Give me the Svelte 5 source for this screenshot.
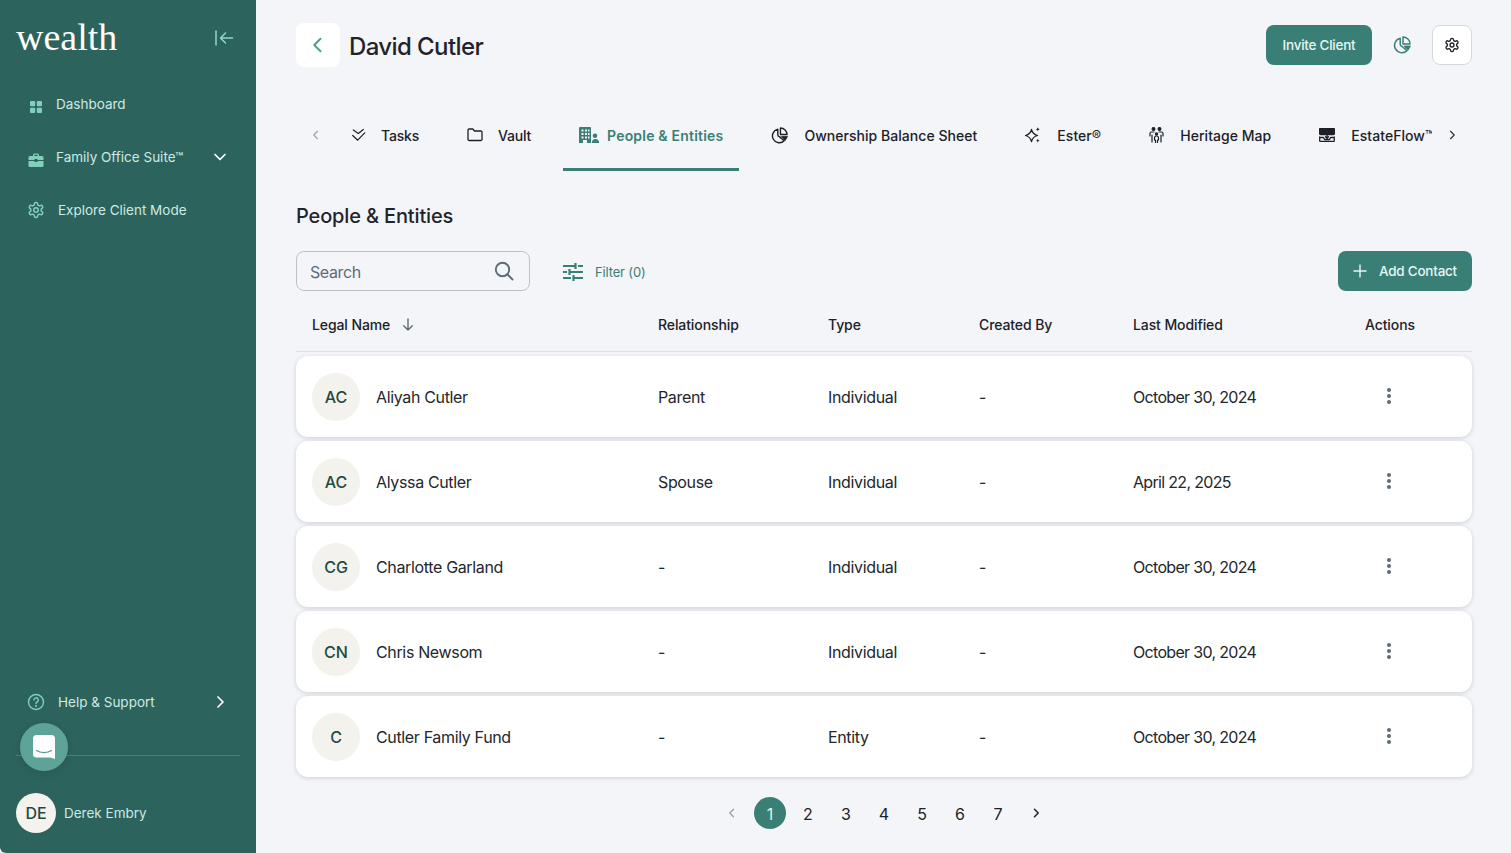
<script>
  const rows = [
    { i: 'AC', name: 'Aliyah Cutler', rel: 'Parent', type: 'Individual', date: 'October 30, 2024' },
    { i: 'AC', name: 'Alyssa Cutler', rel: 'Spouse', type: 'Individual', date: 'April 22, 2025' },
    { i: 'CG', name: 'Charlotte Garland', rel: '-', type: 'Individual', date: 'October 30, 2024' },
    { i: 'CN', name: 'Chris Newsom', rel: '-', type: 'Individual', date: 'October 30, 2024' },
    { i: 'C', name: 'Cutler Family Fund', rel: '-', type: 'Entity', date: 'October 30, 2024' }
  ];
  const pages = [1, 2, 3, 4, 5, 6, 7];
</script>

{#snippet gear(size)}
  <svg width={size} height={size} viewBox="0 0 24 24" fill="none" stroke="currentColor" stroke-width="2" stroke-linecap="round" stroke-linejoin="round">
    <path d="M12.22 2h-.44a2 2 0 0 0-2 2v.18a2 2 0 0 1-1 1.73l-.43.25a2 2 0 0 1-2 0l-.15-.08a2 2 0 0 0-2.73.73l-.22.38a2 2 0 0 0 .73 2.73l.15.1a2 2 0 0 1 1 1.72v.51a2 2 0 0 1-1 1.74l-.15.09a2 2 0 0 0-.73 2.73l.22.38a2 2 0 0 0 2.73.73l.15-.08a2 2 0 0 1 2 0l.43.25a2 2 0 0 1 1 1.73V20a2 2 0 0 0 2 2h.44a2 2 0 0 0 2-2v-.18a2 2 0 0 1 1-1.73l.43-.25a2 2 0 0 1 2 0l.15.08a2 2 0 0 0 2.73-.73l.22-.39a2 2 0 0 0-.73-2.73l-.15-.08a2 2 0 0 1-1-1.74v-.5a2 2 0 0 1 1-1.74l.15-.09a2 2 0 0 0 .73-2.73l-.22-.38a2 2 0 0 0-2.73-.73l-.15.08a2 2 0 0 1-2 0l-.43-.25a2 2 0 0 1-1-1.73V4a2 2 0 0 0-2-2z"/>
    <circle cx="12" cy="12" r="3"/>
  </svg>
{/snippet}

{#snippet pie(size)}
  <svg width={size} height={size} viewBox="0 0 18 18" fill="none" stroke="currentColor" stroke-width="1.500" stroke-linejoin="round">
    <path d="M7.200 2.300a7.300 7.300 0 1 0 6.800 12.300L8.800 10.200a2 2 0 0 1-1.600-1.900z"/>
    <path d="M10 1a7 7 0 0 1 7 7h-7z"/>
    <path d="M11 10h6.500l-2.400 4.200z" fill="currentColor" stroke-width=".8"/>
  </svg>
{/snippet}

{#snippet chevron(dir, size, sw)}
  <svg width={size} height={size} viewBox="0 0 16 16" fill="none" stroke="currentColor" stroke-width={sw} stroke-linecap="round" stroke-linejoin="round">
    {#if dir === 'left'}<path d="M10 3 5 8l5 5"/>{:else if dir === 'right'}<path d="m6 3 5 5-5 5"/>{:else}<path d="m3 5.500 5 5 5-5"/>{/if}
  </svg>
{/snippet}

<div class="page">
  <aside class="side">
    <div class="brand">
      <span class="logo">wealth</span>
      <svg class="collapse" width="20" height="16" viewBox="0 0 20 16" fill="none" stroke="currentColor" stroke-width="1.500" stroke-linecap="round" stroke-linejoin="round">
        <path d="M2 1v14M18.500 8H6.500M11.500 3l-5 5 5 5"/>
      </svg>
    </div>
    <nav class="nav">
      <div class="item">
        <svg class="ico down" width="14" height="14" viewBox="0 0 14 14" fill="currentColor"><rect x="1" y="1" width="5.200" height="5.200" rx="1"/><rect x="7.800" y="1" width="5.200" height="5.200" rx="1"/><rect x="1" y="7.800" width="5.200" height="5.200" rx="1"/><rect x="7.800" y="7.800" width="5.200" height="5.200" rx="1"/></svg>
        <span>Dashboard</span>
      </div>
      <div class="item">
        <svg class="ico down" width="16" height="14" viewBox="0 0 16 14" fill="currentColor"><path d="M5 3V2a1.500 1.500 0 0 1 1.500-1.500h3A1.500 1.500 0 0 1 11 2v1h3a1.500 1.500 0 0 1 1.500 1.500V7H9.500V6h-3v1H.5V4.500A1.500 1.500 0 0 1 2 3zm1.300 0h3.400V1.800H6.300zM.5 8h6v1h3V8h6v4.500A1.500 1.500 0 0 1 14 14H2a1.500 1.500 0 0 1-1.500-1.500z"/></svg>
        <span>Family Office Suite™</span>
        <span class="end white">{@render chevron('down', 16, 1.7)}</span>
      </div>
      <div class="item explore">
        <span class="ico">{@render gear(18)}</span>
        <span>Explore Client Mode</span>
      </div>
    </nav>
    <div class="bottom">
      <div class="item help">
        <svg class="ico" width="18" height="18" viewBox="0 0 18 18" fill="none" stroke="currentColor" stroke-width="1.400" stroke-linecap="round"><circle cx="9" cy="9" r="7.500"/><path d="M6.900 7a2.200 2.200 0 1 1 3.300 1.900c-.8.450-1.200.9-1.200 1.600"/><circle cx="9" cy="13" r=".4"/></svg>
        <span>Help &amp; Support</span>
        <span class="end white">{@render chevron('right', 16, 1.7)}</span>
      </div>
      <div class="user">
        <span class="uav">DE</span>
        <span>Derek Embry</span>
      </div>
      <button class="chat" aria-label="Chat">
        <svg width="22" height="24" viewBox="0 0 22 24"><path d="M3.500 0h15A3.500 3.500 0 0 1 22 3.500V24l-4.500-1.500H3.500A3.500 3.500 0 0 1 0 19V3.500A3.500 3.500 0 0 1 3.500 0z" fill="#fff"/><path d="M3.500 15.500c4 2.700 11 2.700 15 0" fill="none" stroke="#5a9a90" stroke-width="1.300" stroke-linecap="round"/></svg>
      </button>
    </div>
  </aside>

  <main class="main">
    <header class="top">
      <button class="back" aria-label="Back">{@render chevron('left', 20, 1.5)}</button>
      <h1>David Cutler</h1>
      <div class="top-actions">
        <button class="btn invite">Invite Client</button>
        <span class="pie-top">{@render pie(18)}</span>
        <button class="settings" aria-label="Settings">{@render gear(16)}</button>
      </div>
    </header>

    <div class="tabbar">
      <span class="tabnav muted">{@render chevron('left', 12, 1.5)}</span>
      <div class="tabs">
        <div class="tab g13">
          <svg width="16" height="16" viewBox="0 0 16 16" fill="none" stroke="currentColor" stroke-width="1.200" stroke-linecap="round" stroke-linejoin="round"><path d="M1.300 3 6.300 6.500 11.300 2.500M.7 8.500l5 4.700 7-7.400"/></svg>
          <span>Tasks</span>
        </div>
        <div class="tab g15">
          <svg width="16" height="16" viewBox="0 0 16 16" fill="none" stroke="currentColor" stroke-width="1.300" stroke-linejoin="round"><path d="M1 3.200A1.200 1.200 0 0 1 2.200 2h3.600l1.700 2h6.300A1.200 1.200 0 0 1 15 5.200v7.100a1.200 1.200 0 0 1-1.200 1.200H2.200A1.200 1.200 0 0 1 1 12.300z"/></svg>
          <span>Vault</span>
        </div>
        <div class="tab active">
          <svg width="20" height="16" viewBox="0 0 20 16" fill="currentColor"><path fill-rule="evenodd" d="M1 0h10a1 1 0 0 1 1 1v15H0V1a1 1 0 0 1 1-1zm1.500 2.500v2h2v-2zm3.500 0v2h2v-2zm3 0v2h1.500v-2zM2.500 6v2h2V6zM6 6v2h2V6zm3 0v2h1.500V6zM2.500 9.500v2h2v-2zm3.500 0v2h2v-2zm3 0v2h1.500v-2zM4 13v3h4v-3z"/><circle cx="16" cy="8.700" r="2.300"/><path d="M13 16v-1.500a3 3 0 0 1 3-2.500 3.500 3.500 0 0 1 4 2.500V16z"/></svg>
          <span>People &amp; Entities</span>
        </div>
        <div class="tab">
          {@render pie(17)}
          <span>Ownership Balance Sheet</span>
        </div>
        <div class="tab">
          <svg width="16" height="16" viewBox="0 0 16 16" fill="none" stroke="currentColor" stroke-width="1.300" stroke-linejoin="round"><path d="M6.500 2.500Q7.500 7 12.500 8.500 7.500 10 6.500 14.500 5.500 10 .5 8.500 5.500 7 6.500 2.500z"/><path d="M12.800 0c.3 1.500.7 1.900 2.200 2.200-1.500.3-1.900.7-2.200 2.200-.3-1.500-.7-1.900-2.200-2.200 1.500-.3 1.900-.7 2.200-2.200zM12.800 11.400c.3 1.500.7 1.900 2.200 2.200-1.500.3-1.900.7-2.200 2.200-.3-1.500-.7-1.900-2.200-2.200 1.500-.3 1.900-.7 2.200-2.200z" fill="currentColor" stroke="none"/></svg>
          <span>Ester<span class="reg">®</span></span>
        </div>
        <div class="tab">
          <svg width="15" height="16" viewBox="0 0 15 16" fill="none" stroke="currentColor" stroke-width="1.200" stroke-linecap="round" stroke-linejoin="round"><circle cx="4.500" cy="2" r="1.400" fill="currentColor"/><circle cx="10.500" cy="2" r="1.400" fill="currentColor"/><circle cx="7.500" cy="7" r="1.100" fill="currentColor"/><path d="M1 9V6.500A1.500 1.500 0 0 1 2.500 5H5M14 9V6.500A1.500 1.500 0 0 0 12.500 5H10M3 8v7M12 8v7M5.500 13v-2a2 2 0 0 1 4 0v2M6.500 13v2.500M8.500 13v2.500"/></svg>
          <span>Heritage Map</span>
        </div>
        <div class="tab">
          <svg width="16" height="14" viewBox="0 0 16 14" fill="none" stroke="currentColor" stroke-width="1.300" stroke-linecap="round" stroke-linejoin="round"><rect x=".5" y=".5" width="15" height="6" rx="1" fill="currentColor"/><path d="M.7 9v3.500a1 1 0 0 0 1 1h12.600a1 1 0 0 0 1-1V9M.7 9.500h3.800l1 2h5l1-2h3.800M8 6v4M6.500 8.800 8 10.300l1.500-1.500"/></svg>
          <span>EstateFlow™</span>
        </div>
      </div>
      <span class="tabnav dark">{@render chevron('right', 12, 1.5)}</span>
    </div>

    <h2>People &amp; Entities</h2>

    <div class="tools">
      <label class="search">
        <input placeholder="Search" aria-label="Search" />
        <svg width="22" height="22" viewBox="0 0 22 22" fill="none" stroke="#5f6b76" stroke-width="1.900" stroke-linecap="round"><circle cx="9.500" cy="9.500" r="6.700"/><path d="m14.500 14.500 5 5"/></svg>
      </label>
      <button class="filter">
        <svg width="20" height="18" viewBox="0 0 20 18" fill="none" stroke="currentColor" stroke-width="2.200"><path d="M0 3h12M15 3h5M12.500 0v6M0 9h4M7 9h13M6.500 6v6M0 15h8M11 15h9M10.500 12v6"/></svg>
        <span>Filter (0)</span>
      </button>
      <button class="btn add">
        <svg width="14" height="14" viewBox="0 0 14 14" fill="none" stroke="currentColor" stroke-width="1.400" stroke-linecap="round"><path d="M7 1v12M1 7h12"/></svg>
        <span>Add Contact</span>
      </button>
    </div>

    <div class="grid head">
      <div class="sort">
        <span>Legal Name</span>
        <svg width="12" height="13" viewBox="0 0 12 13" fill="none" stroke="#5f6b76" stroke-width="1.400" stroke-linecap="round" stroke-linejoin="round"><path d="M6 1v11M1.700 7.700 6 12l4.300-4.300"/></svg>
      </div>
      <div>Relationship</div>
      <div>Type</div>
      <div>Created By</div>
      <div>Last Modified</div>
      <div>Actions</div>
    </div>

    <div class="rows">
      {#each rows as r}
        <div class="grid row">
          <div class="who"><span class="av">{r.i}</span><span>{r.name}</span></div>
          <div>{r.rel}</div>
          <div>{r.type}</div>
          <div>-</div>
          <div class="date">{r.date}</div>
          <div class="dots"><i></i><i></i><i></i></div>
        </div>
      {/each}
    </div>

    <div class="pager">
      <span class="pg muted">{@render chevron('left', 12, 1.7)}</span>
      {#each pages as p}
        <span class="pg num" class:on={p === 1}>{p}</span>
      {/each}
      <span class="pg">{@render chevron('right', 12, 2)}</span>
    </div>
  </main>
</div>

<style>
  :global(body) {
    margin: 0;
    background: #f3f5f9;
    font-family: Inter, "Liberation Sans", sans-serif;
    color: #1c2127;
  }
  button { font-family: inherit; border: 0; cursor: pointer; padding: 0; }
  .page { display: flex; width: 1511px; height: 853px; overflow: hidden; }

  .side {
    width: 256px; flex: none; box-sizing: border-box;
    background: #2c635c; color: #cdeae3;
    display: flex; flex-direction: column;
    border-radius: 0 0 0 6px;
    font-size: 13.500px;
  }
  .brand { height: 77px; flex: none; display: flex; align-items: center; justify-content: space-between; padding: 0 22px 4px 16px; box-sizing: border-box; }
  .logo { font-family: "Liberation Serif", serif; font-size: 38px; line-height: 1; color: #fff; }
  .collapse { color: #8fd8c6; margin-top: 2px; }
  .item { height: 53px; display: flex; align-items: center; padding: 0 28px; box-sizing: border-box; position: relative; white-space: nowrap; }
  .ico { color: #82d0bc; flex: none; display: flex; }
  .item > .ico { width: 16px; margin-right: 12px; }
  .item > svg.down { margin-top: 6px; }
  .item.explore > .ico, .item.help > .ico { width: 18px; margin: 0 13px 0 -1px; }
  .end { margin-left: auto; display: flex; }
  .white { color: #fff; }
  .bottom { margin-top: auto; position: relative; }
  .user { margin: 27px 16px 0; border-top: 1px solid #468178; height: 98px; padding: 37px 0 21px; box-sizing: border-box; display: flex; gap: 8px; align-items: center; }
  .uav { width: 40px; height: 40px; border-radius: 50%; background: #f4f2ec; color: #1d4a43; font-size: 16px; font-weight: 500; display: flex; align-items: center; justify-content: center; }
  .chat { position: absolute; left: 20px; top: 48px; width: 48px; height: 48px; border-radius: 50%; background: #5da397; display: flex; align-items: center; justify-content: center; box-shadow: 0 2px 8px rgba(0,0,0,.1); }

  .main { flex: 1; min-width: 0; padding: 23px 39px 0 40px; display: flex; flex-direction: column; }
  .top { display: flex; align-items: center; height: 44px; flex: none; }
  .back { width: 44px; height: 44px; border-radius: 8px; background: #fff; color: #4f9a8e; display: flex; align-items: center; justify-content: center; }
  h1 { margin: 2px 0 0 9px; font-size: 24px; font-weight: 500; letter-spacing: -.6px; color: #1f242b; }
  .top-actions { margin-left: auto; display: flex; align-items: center; }
  .btn { background: #3a7f76; color: #e6f6f1; height: 40px; border-radius: 8px; font-size: 13.500px; letter-spacing: -.25px; font-weight: 500; display: flex; align-items: center; justify-content: center; }
  .invite { width: 106px; }
  .pie-top { color: #3a7f76; display: flex; margin: 0 21px; }
  .settings { width: 40px; height: 40px; background: #fff; border: 1px solid #d5d8de; border-radius: 8px; display: flex; align-items: center; justify-content: center; box-sizing: border-box; color: #1c2127; }

  .tabbar { display: flex; margin-top: 33px; height: 71px; flex: none; }
  .tabnav { width: 40px; flex: none; height: 70px; display: flex; align-items: center; justify-content: center; }
  .muted { color: #9aa1a9; }
  .dark { color: #2b3138; }
  .tabs { flex: 1; min-width: 0; overflow: hidden; display: flex; gap: 16px; }
  .tab { flex: none; display: flex; align-items: center; gap: 16px; padding: 0 16px 1px; height: 71px; box-sizing: border-box; font-size: 14px; font-weight: 500; letter-spacing: .04px; white-space: nowrap; }
  .tab.g13 { gap: 13px; letter-spacing: -.2px; }
  .tab.g15 { gap: 15px; letter-spacing: -.2px; }
  .tab.active { color: #3a7f76; gap: 8px; font-weight: 600; letter-spacing: .2px; border-bottom: 3px solid #3a7f76; padding: 2px 16px 0; }
  .reg { font-weight: 400; }

  h2 { margin: 33px 0 0; font-size: 20px; font-weight: 500; line-height: 24px; letter-spacing: -.15px; color: #1f242b; }

  .tools { display: flex; align-items: center; margin-top: 23px; flex: none; }
  .search { width: 234px; height: 40px; box-sizing: border-box; border: 1px solid #bcc1c9; border-radius: 8px; display: flex; align-items: center; padding: 0 14px 0 13px; }
  .search input { flex: 1; min-width: 0; border: 0; outline: 0; background: none; font: inherit; font-size: 16px; letter-spacing: -.4px; padding: 2px 0 0; color: #5f6b76; }
  .search input::placeholder { color: #5f6b76; opacity: 1; }
  .filter { background: none; color: #3a7f76; display: flex; align-items: center; gap: 12px; margin-left: 33px; font-size: 13px; letter-spacing: -.15px; padding-top: 2px; }
  .add { margin-left: auto; width: 134px; gap: 12px; }

  .grid { display: grid; grid-template-columns: 346px 170px 151px 154px 232px 1fr; align-items: center; padding-left: 16px; }
  .head { height: 61px; box-sizing: border-box; border-bottom: 1px solid #dcdfe4; font-size: 14px; font-weight: 500; letter-spacing: -.1px; margin-bottom: 4px; flex: none; padding-top: 6px; }
  .sort { display: flex; align-items: center; gap: 12px; }
  .rows { display: flex; flex-direction: column; gap: 4px; }
  .row { background: #fff; height: 81px; border-radius: 12px; box-shadow: 0 1px 4px rgba(30,40,60,.18); font-size: 16px; letter-spacing: -.35px; color: #22272d; }
  .date { letter-spacing: -.68px; }
  .who { display: flex; align-items: center; gap: 16px; }
  .av { width: 48px; height: 48px; border-radius: 50%; background: #f4f2ec; color: #1d4a43; font-size: 16px; font-weight: 500; letter-spacing: 0; display: flex; align-items: center; justify-content: center; }
  .dots { display: flex; flex-direction: column; gap: 2px; padding: 0 0 2px 22px; }
  .dots i { width: 4px; height: 4px; border-radius: 50%; background: #5f6b76; display: block; }

  .pager { display: flex; justify-content: center; gap: 6px; margin-top: 20px; }
  .pg { width: 32px; height: 32px; display: flex; align-items: center; justify-content: center; font-size: 16px; border-radius: 50%; }
  .pg.num { padding-top: 1px; box-sizing: border-box; }
  .pg.on { background: #3a7f76; color: #dff3ed; }
</style>
